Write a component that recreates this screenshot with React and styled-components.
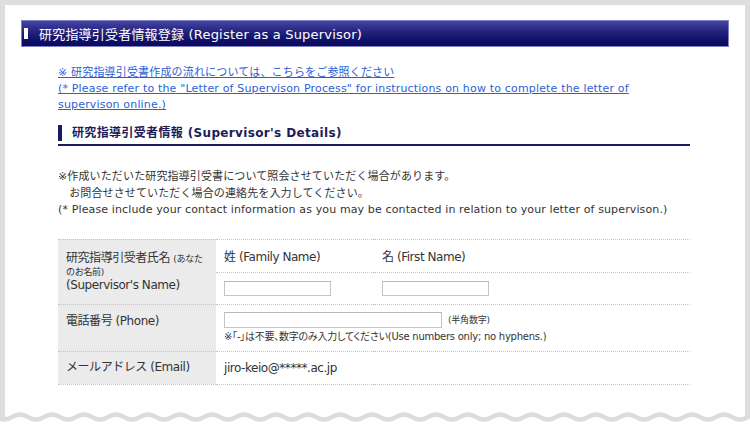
import React from 'react';
import styled, { createGlobalStyle } from 'styled-components';

const GlobalStyle = createGlobalStyle`
  html, body { margin: 0; padding: 0; }
  body {
    background: #dedede;
    font-family: "DejaVu Sans", "Noto Sans CJK JP", sans-serif;
    font-size: 11px;
    color: #333;
  }
`;

const Page = styled.div`
  position: relative;
  width: 750px;
  height: 426px;
  box-sizing: border-box;
  padding: 5px 5px 0;
  overflow: hidden;
`;

const Panel = styled.div`
  background: #fff;
  height: 100%;
  box-sizing: border-box;
  padding: 15px 16px 0;
`;

const TitleBar = styled.h1`
  margin: 0;
  height: 27px;
  box-sizing: border-box;
  border: 1px solid #8282c6;
  background: linear-gradient(#4444a4 0%, #26267f 40%, #11116a 75%, #0b0b5a 100%);
  display: flex;
  align-items: center;
  gap: 11px;
  padding: 0 0 1px 2px;
  color: #fff;
  font-size: 13px;
  font-weight: normal;
  letter-spacing: 0.2px;
  white-space: nowrap;
  &::before {
    content: '';
    width: 4px;
    height: 11px;
    background: #fff;
  }
`;

const Content = styled.div`
  padding: 0 39px 0 37px;
`;

const LinkBlock = styled.div`
  margin-top: 18px;
  line-height: 16px;
  white-space: nowrap;
`;

const Link = styled.a`
  display: block;
  color: #2c5fd6;
  text-decoration: underline;
  letter-spacing: 0.17px;
`;

const SectionHeading = styled.h2`
  margin: 12px 0 0;
  display: flex;
  align-items: center;
  gap: 10px;
  line-height: 16px;
  padding-bottom: 3px;
  border-bottom: 2px solid #1a1a66;
  color: #1c1c5a;
  font-size: 12px;
  font-weight: bold;
  letter-spacing: 0.35px;
  &::before {
    content: '';
    width: 4px;
    height: 16px;
    background: #1a1a66;
  }
`;

const Notice = styled.p`
  margin: 23px 0 0;
  line-height: 16.5px;
  letter-spacing: 0.13px;
  white-space: nowrap;
`;

const FormTable = styled.table`
  margin-top: 20px;
  width: 100%;
  border-collapse: collapse;
  font-size: 12px;
  letter-spacing: -0.45px;
  td, th {
    border-top: 1px dotted #c6c6c6;
    border-bottom: 1px dotted #c6c6c6;
    padding: 0 8px;
    text-align: left;
    font-weight: normal;
  }
`;

const LabelCell = styled.th`
  width: 158px;
  box-sizing: border-box;
  background: #ebebeb;
  vertical-align: ${p => (p.$top ? 'top' : 'middle')};
  padding-top: ${p => (p.$top ? '9px' : '0')} !important;
  line-height: 15px;
  height: ${p => p.$h}px;
`;

const ValueCell = styled.td`
  height: ${p => p.$h}px;
  vertical-align: ${p => (p.$top ? 'top' : 'middle')};
  padding-top: ${p => (p.$top ? '7px' : '0')} !important;
  width: ${p => (p.$w ? p.$w + 'px' : 'auto')};
  box-sizing: border-box;
`;

const SmallNote = styled.span`
  font-size: 9px;
  letter-spacing: -0.3px;
`;

const SmallLine = styled.div`
  font-size: 9px;
  line-height: 11px;
  letter-spacing: -0.3px;
`;

const TextInput = styled.input`
  display: block;
  width: ${p => p.$w}px;
  height: ${p => p.$h}px;
  box-sizing: border-box;
  margin: 0;
  padding: 0 2px;
  border: 1px solid #c4c4c4;
  border-top-color: #b8b8b8;
  background: #fff;
  outline: none;
`;

const InlineRow = styled.div`
  display: flex;
  align-items: center;
  gap: 6px;
`;

const Hint = styled.span`
  font-size: 9px;
  letter-spacing: -0.2px;
`;

const NoteLine = styled.div`
  margin-top: 3px;
  font-size: 10px;
  line-height: 12px;
  letter-spacing: -0.25px;
  font-feature-settings: "palt";
  white-space: nowrap;
`;

const WaveSvg = styled.svg`
  position: absolute;
  left: 0;
  bottom: 0;
  display: block;
`;

function Wave() {
  const pts = [];
  for (let x = 0; x <= 750; x += 2) {
    const y = 7 - 2.5 * Math.cos((2 * Math.PI * (x - 20)) / 32);
    pts.push(`${x},${y.toFixed(2)}`);
  }
  const line = 'M' + pts.join(' L');
  const fill = line + ' L750,16 L0,16 Z';
  return (
    <WaveSvg width="750" height="16" viewBox="0 0 750 16">
      <path d={fill} fill="#fff" />
      <path d={line} fill="none" stroke="#dcdcdc" strokeWidth="4.5" />
    </WaveSvg>
  );
}

export default function App() {
  return (
    <>
      <GlobalStyle />
      <Page>
        <Panel>
          <TitleBar>研究指導引受者情報登録 (Register as a Supervisor)</TitleBar>
          <Content>
            <LinkBlock>
              <Link href="#">※ 研究指導引受書作成の流れについては、こちらをご参照ください</Link>
              <Link href="#">
                (* Please refer to the "Letter of Supervison Process" for instructions on how to complete the letter of
                <br />
                supervison online.)
              </Link>
            </LinkBlock>

            <SectionHeading>研究指導引受者情報 (Supervisor's Details)</SectionHeading>

            <Notice>
              ※作成いただいた研究指導引受書について照会させていただく場合があります。
              <br />
              {'\u3000お問合せさせていただく場合の連絡先を入力してください。'}
              <br />
              (* Please include your contact information as you may be contacted in relation to your letter of supervison.)
            </Notice>

            <FormTable>
              <tbody>
                <tr>
                  <LabelCell rowSpan={2}>
                    <div>
                      研究指導引受者氏名 <SmallNote>(あなた</SmallNote>
                    </div>
                    <SmallLine>のお名前)</SmallLine>
                    <div>(Supervisor's Name)</div>
                  </LabelCell>
                  <ValueCell $h={33} $w={158}>姓 (Family Name)</ValueCell>
                  <ValueCell $h={33}>名 (First Name)</ValueCell>
                </tr>
                <tr>
                  <ValueCell $h={32} $w={158}>
                    <TextInput $w={107} $h={15} />
                  </ValueCell>
                  <ValueCell $h={32}>
                    <TextInput $w={107} $h={15} />
                  </ValueCell>
                </tr>
                <tr>
                  <LabelCell $top $h={47}>電話番号 (Phone)</LabelCell>
                  <ValueCell $top $h={47} colSpan={2}>
                    <InlineRow>
                      <TextInput $w={218} $h={16} />
                      <Hint>(半角数字)</Hint>
                    </InlineRow>
                    <NoteLine>※「-」は不要、数字のみ入力してください(Use numbers only; no hyphens.)</NoteLine>
                  </ValueCell>
                </tr>
                <tr>
                  <LabelCell $h={33}>メールアドレス (Email)</LabelCell>
                  <ValueCell $h={33} colSpan={2}>jiro-keio@*****.ac.jp</ValueCell>
                </tr>
              </tbody>
            </FormTable>
          </Content>
        </Panel>
        <Wave />
      </Page>
    </>
  );
}
